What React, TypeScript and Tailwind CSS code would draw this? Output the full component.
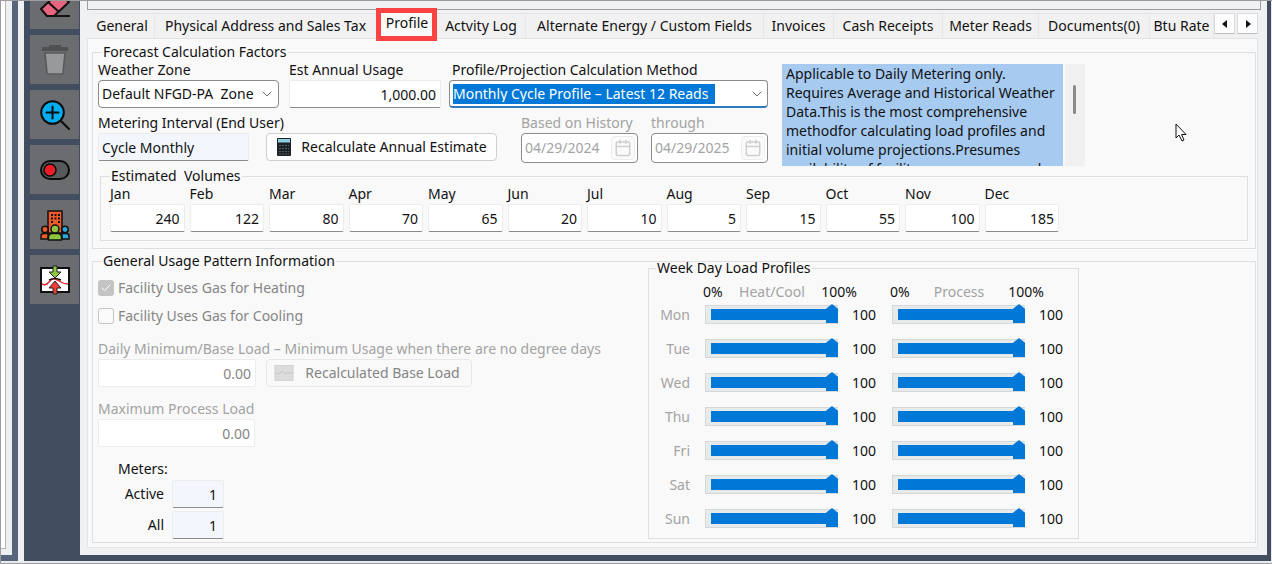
import React, { useState } from "react";
import { Calendar, Check, ChevronDown } from "lucide-react";
import clsx from "clsx";

const tabs = [
  { name: "General", width: "w-[65px]" },
  { name: "Physical Address and Sales Tax", width: "w-[222px]" },
  { name: "Profile", width: "w-[60px]" },
  { name: "Actvity Log", width: "w-[89px]" },
  { name: "Alternate Energy / Custom Fields", width: "w-[238px]" },
  { name: "Invoices", width: "w-[70px]" },
  { name: "Cash Receipts", width: "w-[109px]" },
  { name: "Meter Reads", width: "w-[96px]" },
  { name: "Documents(0)", width: "w-[111px]" },
  { name: "Btu Rate", width: "w-[64px]" },
];

const volumes = [
  ["Jan", "240"],
  ["Feb", "122"],
  ["Mar", "80"],
  ["Apr", "70"],
  ["May", "65"],
  ["Jun", "20"],
  ["Jul", "10"],
  ["Aug", "5"],
  ["Sep", "15"],
  ["Oct", "55"],
  ["Nov", "100"],
  ["Dec", "185"],
];

const days = ["Mon", "Tue", "Wed", "Thu", "Fri", "Sat", "Sun"];

const methodHelp = `Applicable to Daily Metering only.
Requires Average and Historical Weather
Data.This is the most comprehensive
methodfor calculating load profiles and
initial volume projections.Presumes
availability of facility usage processand`;

const EraserIcon = () => (
  <svg viewBox="0 0 30 30" className="w-[30px] h-[30px]" strokeLinejoin="round">
    <path d="M1 21 18 5 29 14 14 28H7Z" fill="#e8657f" stroke="#111" strokeWidth="2" />
    <path d="M8 14 19 24" stroke="#111" strokeWidth="2" />
    <path d="M12 28H30" stroke="#111" strokeWidth="2" />
  </svg>
);

const TrashIcon = () => (
  <svg viewBox="0 0 30 30" className="w-[30px] h-[30px]">
    <path d="M10 2V1H20V2" fill="none" stroke="#4f5052" strokeWidth="2" />
    <path d="M2 2H28V6H2Z" fill="#4f5052" />
    <path d="M5 8H25L23 28Q23 29 22 29H8Q7 29 7 28Z" fill="#98999b" stroke="#58595b" strokeWidth="1.6" />
  </svg>
);

const ZoomIcon = () => (
  <svg viewBox="0 0 30 30" className="w-[30px] h-[30px]" fill="none" stroke="#0b0b0b" strokeWidth="2" strokeLinecap="round">
    <circle cx="12.500" cy="12.500" r="11.300" fill="#00aeef" />
    <path d="M12.500 6.500V18.500M6.500 12.500H18.500M21 21 29 29" />
  </svg>
);

const ToggleIcon = () => (
  <svg viewBox="0 0 30 30" className="w-[30px] h-[30px]" stroke="#0b0b0b" strokeWidth="2">
    <rect x="1" y="6" width="28" height="18" rx="9" fill="#58595b" />
    <circle cx="10" cy="15" r="6" fill="#ed1c24" strokeWidth="1.500" />
  </svg>
);

const FacilityIcon = () => (
  <svg viewBox="0 0 30 32" className="w-[30px] h-8" stroke="#111" strokeWidth="1.500">
    <path d="M8 2H22V24H8Z" fill="#f15a29" />
    <path d="M11 6H13M14.500 6H16.500M18 6H20M11 9.500H13M14.500 9.500H16.500M18 9.500H20M11 13H13M18 13H20" strokeWidth="2" />
    <circle cx="5" cy="20.500" r="3.200" fill="#f15a29" />
    <path d="M1 30V27Q1 24.500 4 24.500H8V30Z" fill="#f15a29" />
    <circle cx="25" cy="20.500" r="3.200" fill="#29abe2" />
    <path d="M22 30V24.500H26Q29 24.500 29 27V30Z" fill="#29abe2" />
    <circle cx="15" cy="20" r="4" fill="#8cc63f" />
    <path d="M8.500 31V28Q9 24.500 12 24.500H18Q21 24.500 21.500 28V31Z" fill="#8cc63f" />
  </svg>
);

const ProfileChartIcon = () => (
  <svg viewBox="0 0 30 30" className="w-[30px] h-[30px]">
    <path d="M1 3H29V27H1Z" fill="#fff" stroke="#111" strokeWidth="2" />
    <path d="M2 19Q6 21 9 17T15 14T21 17T28 19" fill="none" stroke="#e8232d" strokeWidth="1.500" />
    <path d="M9 15Q15 12 21 15" fill="none" stroke="#111" strokeWidth="1.500" />
    <path d="M13 1H17V7H21L15 13 9 7H13Z" fill="#8cc63f" stroke="#222" />
    <path d="M13 29H17V23H21L15 16 9 23H13Z" fill="#f03e36" stroke="#222" />
  </svg>
);

const CalculatorIcon = () => (
  <svg viewBox="0 0 16 20" className="w-4 h-5 shrink-0">
    <rect x="1" y="1" width="14" height="18" rx="1" fill="#1d2226" />
    <path d="M2 2H14V5.500H2Z" fill="#8ed0e0" />
    <path d="M3 8.500H13M3 11.500H13M3 14.500H13M3 17H13" stroke="#555c61" strokeDasharray="2 1" />
  </svg>
);

const BaseLoadIcon = () => (
  <svg viewBox="0 0 20 16" className="w-5 h-4 shrink-0">
    <rect x="1" y="0" width="18" height="16" fill="#dcdcdc" stroke="#cfcfcf" />
    <path d="M2 8 5 9 8 6 11 9 14 7 16 9 19 7" fill="none" stroke="#c2c2c2" />
  </svg>
);

const tools = [
  { name: "Delete", icon: <TrashIcon /> },
  { name: "Zoom", icon: <ZoomIcon /> },
  { name: "Toggle", icon: <ToggleIcon /> },
  { name: "Facilities", icon: <FacilityIcon /> },
  { name: "Load Profile", icon: <ProfileChartIcon /> },
];

const Field = ({ id, label, value, className, labelClass, inputClass }: any) => (
  <div className={className}>
    <label htmlFor={id} className={clsx("block whitespace-nowrap", labelClass)}>
      {label}
    </label>
    <input
      id={id}
      defaultValue={value}
      className={clsx(
        "block w-full h-7 mt-0.5 rounded-xs border border-[#ececec] outline-none",
        inputClass
      )}
    />
  </div>
);

const DateField = ({ id, label, value, className }: any) => (
  <div className={className}>
    <label htmlFor={id} className="block text-[#a3a3a3]">
      {label}
    </label>
    <div className="flex items-center h-[30px] mt-0.5 pl-[3px] pr-0.5 rounded-[4px] border border-[#8b8b8b] bg-white">
      <input id={id} defaultValue={value} disabled className="w-0 flex-1 text-[#a3a3a3] outline-none" />
      <button className="flex items-center justify-center w-6 h-6 rounded-[4px] border border-[#ececec] bg-[#fafafa]" aria-label={"Pick " + label}>
        <Calendar className="w-[18px] h-[18px] text-[#cfcfcf]" />
      </button>
    </div>
  </div>
);

const LoadSlider = ({ label }: { label: string }) => {
  const [value, setValue] = useState(100);
  return (
    <div className="flex items-center">
      <input
        type="range"
        aria-label={label}
        value={value}
        onChange={(e) => setValue(Number(e.target.value))}
        className="appearance-none block w-[133px] h-[19px] pl-[5px] border border-r-0 border-[#d6d8d8] bg-[#e7eaea] [&::-webkit-slider-runnable-track]:h-[11px] [&::-webkit-slider-runnable-track]:bg-[#0078d7] [&::-webkit-slider-thumb]:appearance-none [&::-webkit-slider-thumb]:w-3 [&::-webkit-slider-thumb]:h-[19px] [&::-webkit-slider-thumb]:-mt-[5px] [&::-webkit-slider-thumb]:bg-[#0078d7] [&::-webkit-slider-thumb]:[clip-path:polygon(50%_0,100%_25%,100%_100%,0_100%,0_25%)]"
      />
      <output className="w-[38px] text-right">{value}</output>
    </div>
  );
};

const App = () => {
  const [activeTab, setActiveTab] = useState("Profile");

  return (
    <div className="min-h-screen flex border-t border-l border-b border-[#9c9c9f] bg-[#e9eaec] pb-0.5 overflow-hidden font-['Noto_Sans','Open_Sans',sans-serif] text-sm leading-4 text-[#111]">
      {/* Edge of the window behind */}
      <div className="flex w-[17px] pr-[6px] pb-[6px] bg-[#56647c]">
        <div className="flex flex-1 pr-[6px] pb-[6px] bg-[#eeeff2]">
          <div className="flex-1 border-r border-b border-[#b5b5b8] bg-white" />
        </div>
      </div>
      <div className="w-[6px] bg-[#f0f0f1]" />

      <div className="flex flex-1 min-w-0 pr-1 pb-[6px] mr-px bg-[#424d5f]">
        {/* Tool bar */}
        <nav className="w-14 pl-[6px] pr-px flex flex-col gap-[6px]">
          <button aria-label="Erase" className="flex items-end justify-center h-7 pb-[11px] overflow-hidden bg-[#6b6c6f]">
            <EraserIcon />
          </button>
          {tools.map((tool) => (
            <button key={tool.name} aria-label={tool.name} className="flex items-center justify-center h-[49px] bg-[#6b6c6f]">
              {tool.icon}
            </button>
          ))}
        </nav>

        <main className="flex flex-col flex-1 min-w-0 pl-[7px] pr-[6px] pb-[7px] bg-[#f0f1f2]">
          <div className="h-[9px] border-x border-b border-[#9c9c9f]" />

          {/* Tabs */}
          <div className="flex items-start pl-[3px] pt-[3px]">
            <div role="tablist" className="flex items-end flex-1 min-w-0">
              {tabs.map((tab) => (
                <button
                  key={tab.name}
                  role="tab"
                  aria-selected={tab.name === activeTab}
                  onClick={() => setActiveTab(tab.name)}
                  className={clsx(
                    "h-[25px] shrink-0 whitespace-nowrap",
                    tab.width,
                    tab.name === activeTab
                      ? "relative pb-[5px] bg-[#f9f9f9]"
                      : "border-t border-r border-[#e6e6e6] bg-[#f1f1f1]"
                  )}
                >
                  {tab.name}
                  {tab.name === activeTab && (
                    <span className="absolute -left-px right-0 -top-[5px] -bottom-[3px] border-[5px] border-[#fa4444]" />
                  )}
                </button>
              ))}
            </div>
            <div className="flex gap-0.5 mr-[3px]">
              <button aria-label="Previous tabs" className="flex items-center justify-center w-[21px] h-[21px] border border-[#dcdcdc] border-b-[#bdbdbd] bg-[#fdfdfd]">
                <svg viewBox="0 0 6 8" className="w-[6px] h-2">
                  <path d="M5 0V8L0 4Z" fill="#111" />
                </svg>
              </button>
              <button aria-label="Next tabs" className="flex items-center justify-center w-[21px] h-[21px] border border-[#dcdcdc] border-b-[#bdbdbd] bg-[#fdfdfd]">
                <svg viewBox="0 0 6 8" className="w-[6px] h-2">
                  <path d="M1 0V8L6 4Z" fill="#111" />
                </svg>
              </button>
            </div>
          </div>

          {/* Tab page */}
          <div className="flex flex-col flex-1 mr-[3px] pl-1 pr-px pt-[5px] pb-1 border border-[#e4e4e4] bg-[#f9f9f9]">
            <fieldset className="min-w-0 px-[5px] pb-[7px] border border-[#dedede]">
              <legend className="ml-1 px-px">Forecast Calculation Factors</legend>
              <div className="flex pt-0.5">
                <div className="w-[670px]">
                  <div className="flex">
                    <div className="w-[181px]">
                      <label htmlFor="zone" className="block">
                        Weather Zone
                      </label>
                      <div className="relative mt-0.5">
                        <select id="zone" className="appearance-none block w-full h-7 pl-[3px] rounded-[4px] border border-[#8b8b8b] bg-white whitespace-pre">
                          <option>{"Default NFGD-PA\u00a0 Zone"}</option>
                        </select>
                        <ChevronDown className="absolute right-1 top-1.5 w-4 h-4 text-[#6e6e6e] pointer-events-none" strokeWidth={1.5} />
                      </div>
                    </div>
                    <Field
                      id="usage"
                      label="Est Annual Usage"
                      value="1,000.00"
                      className="w-[152px] ml-[10px]"
                      inputClass="px-1 text-right bg-white border-b-[#8b8b8b]"
                    />
                    <div className="flex-1 ml-2">
                      <label htmlFor="method" className="block ml-[3px]">
                        Profile/Projection Calculation Method
                      </label>
                      <div className="relative flex items-center h-7 mt-0.5 pl-[3px] rounded-[4px] border border-[#8b8b8b] border-b-2 border-b-[#2f79bd] bg-white">
                        <select id="method" className="appearance-none h-5 w-[262px] bg-[#0078d7] text-white outline-none">
                          <option>Monthly Cycle Profile – Latest 12 Reads</option>
                        </select>
                        <ChevronDown className="absolute right-0.5 w-4 h-4 text-[#6e6e6e] pointer-events-none" strokeWidth={1.5} />
                      </div>
                    </div>
                  </div>

                  <div className="flex items-start mt-[7px]">
                    <Field
                      id="interval"
                      label="Metering Interval (End User)"
                      value="Cycle Monthly"
                      className="w-[151px]"
                      inputClass="px-[3px] bg-[#f3f7fd] border-b-[#8b8b8b]"
                    />
                    <button className="flex items-center w-[231px] h-7 mt-[18px] ml-[17px] pl-[9px] rounded-[4px] border border-[#cfcfcf] bg-[#fdfdfd] whitespace-nowrap">
                      <CalculatorIcon />
                      <span className="flex-1 text-center">Recalculate Annual Estimate</span>
                    </button>
                    <DateField id="from" label="Based on History" value="04/29/2024" className="w-[117px] ml-auto" />
                    <DateField id="to" label="through" value="04/29/2025" className="w-[117px] ml-[13px]" />
                  </div>
                </div>

                <div className="flex h-[102px] mt-0.5 ml-[14px]">
                  <textarea
                    aria-label="Calculation method description"
                    readOnly
                    defaultValue={methodHelp}
                    className="block w-[281px] h-full pl-1 resize-none overflow-hidden whitespace-pre leading-[19px] bg-[#a6caf0] outline-none"
                  />
                  <div className="w-5 ml-0.5 pt-[21px] pl-2 bg-[#f0f0f0]">
                    <div className="w-[3px] h-[29px] rounded-full bg-[#8a8a8a]" />
                  </div>
                </div>
              </div>

              <fieldset className="min-w-0 mt-0.5 ml-0.5 mr-0.5 px-[9px] pb-2 border border-[#dedede]">
                <legend className="whitespace-pre px-px">{"Estimated  Volumes"}</legend>
                <div className="grid grid-cols-12 gap-x-[5px] w-[949px] pt-0.5">
                  {volumes.map(([month, amount]) => (
                    <Field
                      key={month}
                      id={month}
                      label={month}
                      value={amount}
                      inputClass="px-1 text-right bg-white border-b-[#8b8b8b]"
                    />
                  ))}
                </div>
              </fieldset>
            </fieldset>

            <fieldset className="min-w-0 flex-1 mt-1 px-[5px] border border-[#dedede]">
              <legend className="ml-1 px-px">General Usage Pattern Information</legend>
              <div className="flex items-start">
                <div className="w-[550px] pt-[11px]">
                  <div className="flex items-center h-4 text-[#858585]">
                    <span className="relative flex w-4 h-4">
                      <input
                        id="heating"
                        type="checkbox"
                        defaultChecked
                        disabled
                        className="appearance-none w-4 h-4 rounded-[3px] bg-[#c4c4c4]"
                      />
                      <Check className="absolute inset-0.5 w-3 h-3 text-white" />
                    </span>
                    <label htmlFor="heating" className="ml-1">
                      Facility Uses Gas for Heating
                    </label>
                  </div>
                  <div className="flex items-center h-4 mt-3 text-[#858585]">
                    <input
                      id="cooling"
                      type="checkbox"
                      disabled
                      className="appearance-none w-4 h-4 rounded-[3px] border border-[#c4c4c4] bg-[#fbfbfb]"
                    />
                    <label htmlFor="cooling" className="ml-1">
                      Facility Uses Gas for Cooling
                    </label>
                  </div>

                  <div className="flex items-end mt-[17px]">
                    <Field
                      id="base"
                      label="Daily Minimum/Base Load – Minimum Usage when there are no degree days"
                      value="0.00"
                      className="w-[158px]"
                      labelClass="text-[#a3a3a3]"
                      inputClass="px-1 text-right bg-white text-[#858585]"
                    />
                    <button disabled className="flex items-center w-[206px] h-7 ml-[10px] pl-[7px] rounded-[4px] border border-[#e8e8e8] bg-[#f9f9f9] text-[#858585]">
                      <BaseLoadIcon />
                      <span className="flex-1 text-center">Recalculated Base Load</span>
                    </button>
                  </div>

                  <Field
                    id="process"
                    label="Maximum Process Load"
                    value="0.00"
                    className="w-[157px] mt-[14px]"
                    labelClass="text-[#a3a3a3]"
                    inputClass="px-1 text-right bg-white text-[#858585]"
                  />

                  <div className="w-[126px] mt-[14px]">
                    <p className="ml-5">Meters:</p>
                    {["Active", "All"].map((name) => (
                      <div key={name} className="flex items-center justify-end gap-2 mt-[3px]">
                        <label htmlFor={name}>{name}</label>
                        <input
                          id={name}
                          defaultValue="1"
                          className="w-[52px] h-7 px-[6px] rounded-xs border border-[#ececec] border-b-[#8b8b8b] bg-[#f3f7fd] text-right outline-none"
                        />
                      </div>
                    ))}
                  </div>
                </div>

                <fieldset className="w-[431px] -mt-[9px] pb-[10px] border border-[#dedede]">
                  <legend className="ml-[7px] px-px">Week Day Load Profiles</legend>
                  <div className="flex pt-2 pl-[54px]">
                    {["Heat/Cool", "Process"].map((title) => (
                      <div key={title} className="flex justify-between w-[154px] mr-[33px]">
                        <span>0%</span>
                        <span className="text-[#a3a3a3]">{title}</span>
                        <span>100%</span>
                      </div>
                    ))}
                  </div>
                  <div className="flex flex-col gap-[15px] pt-[5px]">
                    {days.map((day) => (
                      <div key={day} className="flex items-center">
                        <span className="w-[41px] mr-[15px] text-right text-[#a3a3a3]">{day}</span>
                        <LoadSlider label={day + " heat/cool"} />
                        <span className="w-4" />
                        <LoadSlider label={day + " process"} />
                      </div>
                    ))}
                  </div>
                </fieldset>
              </div>
            </fieldset>
          </div>
        </main>
      </div>

      {/* Mouse pointer */}
      <svg viewBox="0 0 12 19" className="absolute left-[1175px] top-[123px] w-3 h-[19px]">
        <path d="M1 1V15L4 12 7 18 9 17 6.500 11.500H11Z" fill="#fff" stroke="#111" />
      </svg>
    </div>
  );
};

export default App;
